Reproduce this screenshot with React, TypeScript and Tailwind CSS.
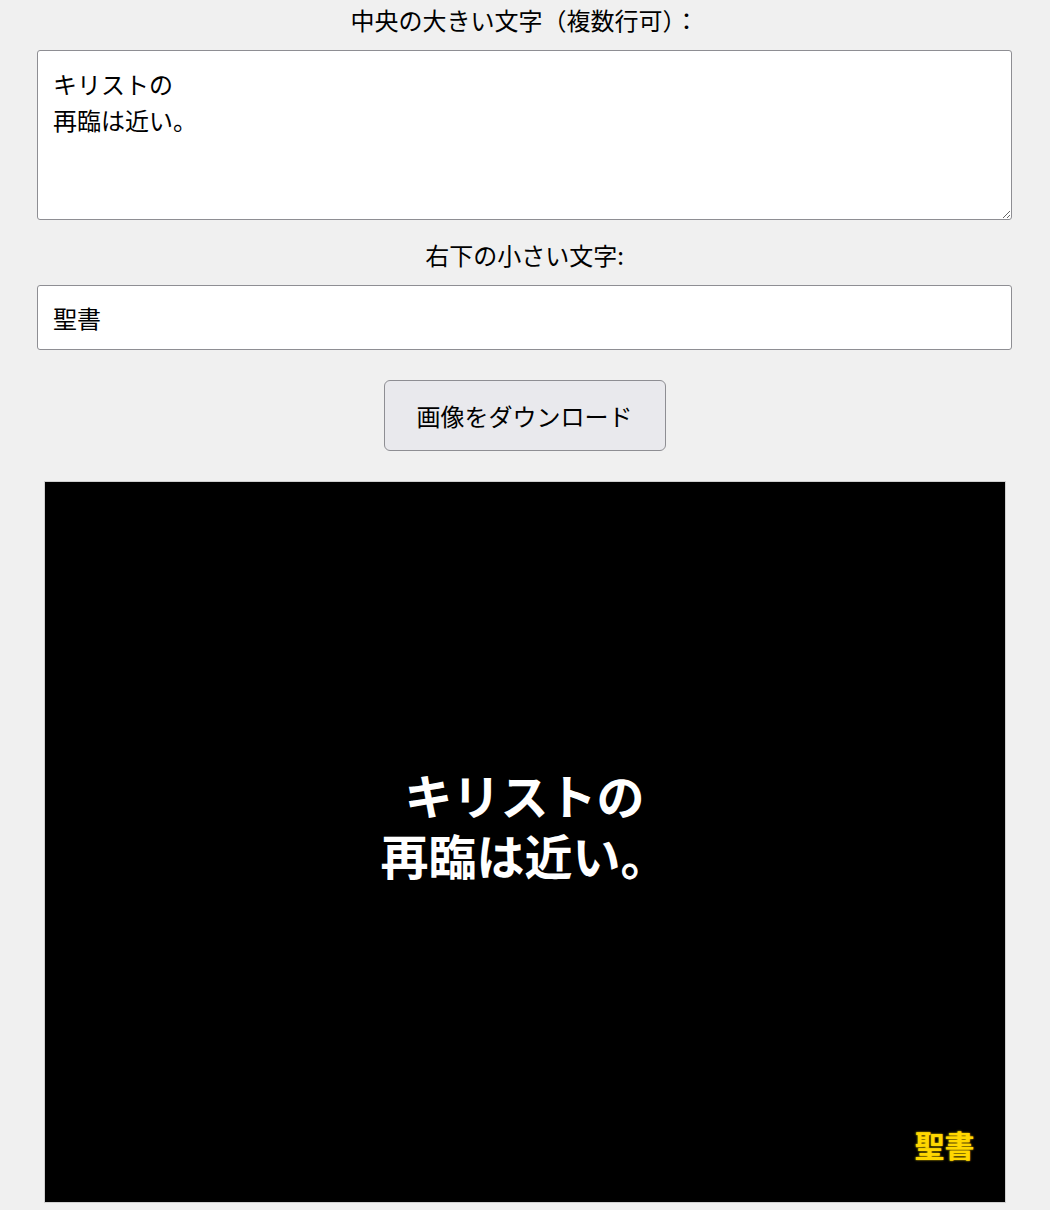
import { useState } from 'react'

const font = { fontFamily: '"Noto Sans CJK JP", "Noto Sans", sans-serif' }

export default function App() {
  const [mainText, setMainText] = useState('キリストの\n再臨は近い。')
  const [subText, setSubText] = useState('聖書')

  return (
    <div
      className="min-h-[1210px] w-full bg-[#f0f0f0] text-black"
      style={font}
    >
      <div className="ml-[37px] flex w-[975px] flex-col items-center pt-[6px]">
        <label className="block text-center text-[24px] leading-[28px]">
          中央の大きい文字（複数行可）：
        </label>
        <textarea
          value={mainText}
          onChange={(e) => setMainText(e.target.value)}
          className="mt-[16px] block h-[170px] w-full resize-y rounded-[3px] border border-[#8e8e93] bg-white px-[15px] pt-[15px] text-[24px] leading-[36px] outline-none"
          style={font}
        />

        <label className="mt-[21px] block text-center text-[24px] leading-[28px]">
          右下の小さい文字:
        </label>
        <input
          value={subText}
          onChange={(e) => setSubText(e.target.value)}
          className="mt-[16px] block h-[65px] w-full rounded-[3px] border border-[#8e8e93] bg-white px-[15px] text-[24px] outline-none"
          style={font}
        />

        <button
          className="mt-[30px] h-[71px] w-[282px] rounded-[6px] border border-[#8e8e93] bg-[#e9e9ed] text-[24px]"
          style={font}
        >
          画像をダウンロード
        </button>

        <div className="relative mt-[30px] mb-[7px] h-[722px] w-[962px] border border-[#cfcfcf] bg-black">
          <div className="flex h-full items-center justify-center pb-[36px]">
            <p className="whitespace-pre text-center text-[48px] font-bold leading-[60px] text-white">
              {mainText}
            </p>
          </div>
          <span className="absolute right-[30px] bottom-[40px] text-[30px] font-bold leading-[36px] text-[#ffd700] [text-shadow:0_0_2px_#ffd700]">
            {subText}
          </span>
        </div>
      </div>
    </div>
  )
}
